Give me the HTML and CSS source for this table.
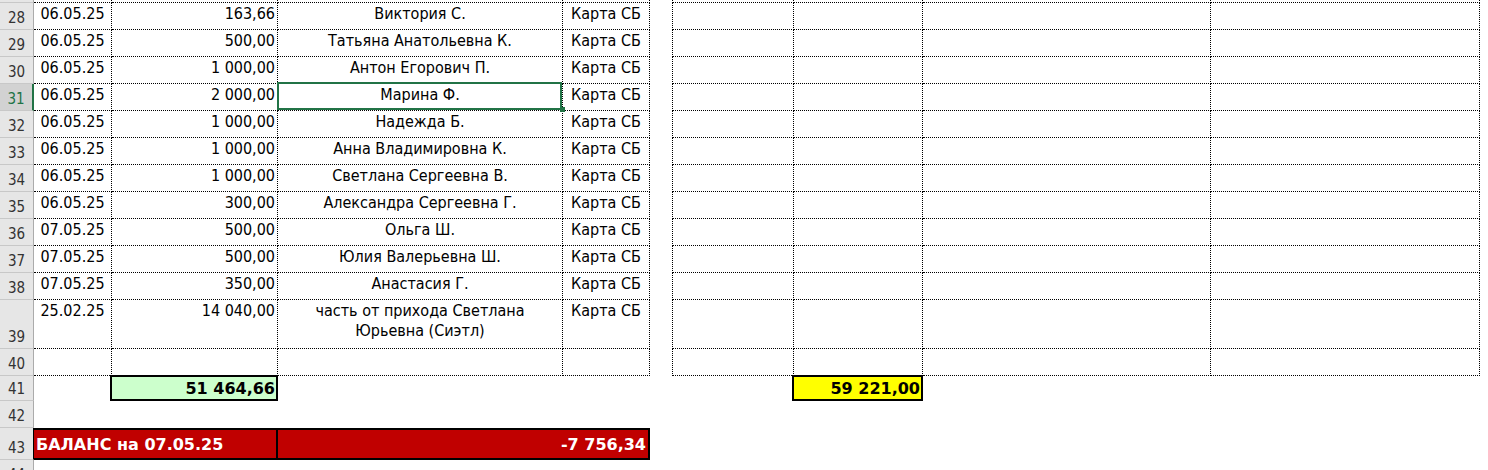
FILE: index.html
```html
<!DOCTYPE html>
<html>
<head>
    <title>Баланс</title>
    <meta charset="utf-8">
    <link rel="stylesheet" href="styles.css">
</head>
<body>
    <div class="sheet">
        <!-- tail of row 27 -->
        <div class="row r27">
            <div class="hd"></div>
            <div class="cell"></div>
            <div class="cell"></div>
            <div class="cell"></div>
            <div class="cell"></div>
            <div></div>
            <div class="cell first"></div>
            <div class="cell"></div>
            <div class="cell"></div>
            <div class="cell"></div>
            <div></div>
        </div>

        <div class="row">
            <div class="hd">28</div>
            <div class="cell ctr">06.05.25</div>
            <div class="cell num">163,66</div>
            <div class="cell ctr">Виктория С.</div>
            <div class="cell ctr">Карта СБ</div>
            <div></div>
            <div class="cell first"></div>
            <div class="cell"></div>
            <div class="cell"></div>
            <div class="cell"></div>
            <div></div>
        </div>

        <div class="row">
            <div class="hd">29</div>
            <div class="cell ctr">06.05.25</div>
            <div class="cell num">500,00</div>
            <div class="cell ctr">Татьяна Анатольевна К.</div>
            <div class="cell ctr">Карта СБ</div>
            <div></div>
            <div class="cell first"></div>
            <div class="cell"></div>
            <div class="cell"></div>
            <div class="cell"></div>
            <div></div>
        </div>

        <div class="row">
            <div class="hd">30</div>
            <div class="cell ctr">06.05.25</div>
            <div class="cell num">1 000,00</div>
            <div class="cell ctr">Антон Егорович П.</div>
            <div class="cell ctr">Карта СБ</div>
            <div></div>
            <div class="cell first"></div>
            <div class="cell"></div>
            <div class="cell"></div>
            <div class="cell"></div>
            <div></div>
        </div>

        <div class="row">
            <div class="hd active">31</div>
            <div class="cell ctr">06.05.25</div>
            <div class="cell num">2 000,00</div>
            <div class="cell ctr selected">Марина Ф.</div>
            <div class="cell ctr">Карта СБ</div>
            <div></div>
            <div class="cell first"></div>
            <div class="cell"></div>
            <div class="cell"></div>
            <div class="cell"></div>
            <div></div>
        </div>

        <div class="row">
            <div class="hd">32</div>
            <div class="cell ctr">06.05.25</div>
            <div class="cell num">1 000,00</div>
            <div class="cell ctr">Надежда Б.</div>
            <div class="cell ctr">Карта СБ</div>
            <div></div>
            <div class="cell first"></div>
            <div class="cell"></div>
            <div class="cell"></div>
            <div class="cell"></div>
            <div></div>
        </div>

        <div class="row">
            <div class="hd">33</div>
            <div class="cell ctr">06.05.25</div>
            <div class="cell num">1 000,00</div>
            <div class="cell ctr">Анна Владимировна К.</div>
            <div class="cell ctr">Карта СБ</div>
            <div></div>
            <div class="cell first"></div>
            <div class="cell"></div>
            <div class="cell"></div>
            <div class="cell"></div>
            <div></div>
        </div>

        <div class="row">
            <div class="hd">34</div>
            <div class="cell ctr">06.05.25</div>
            <div class="cell num">1 000,00</div>
            <div class="cell ctr">Светлана Сергеевна В.</div>
            <div class="cell ctr">Карта СБ</div>
            <div></div>
            <div class="cell first"></div>
            <div class="cell"></div>
            <div class="cell"></div>
            <div class="cell"></div>
            <div></div>
        </div>

        <div class="row">
            <div class="hd">35</div>
            <div class="cell ctr">06.05.25</div>
            <div class="cell num">300,00</div>
            <div class="cell ctr">Александра Сергеевна Г.</div>
            <div class="cell ctr">Карта СБ</div>
            <div></div>
            <div class="cell first"></div>
            <div class="cell"></div>
            <div class="cell"></div>
            <div class="cell"></div>
            <div></div>
        </div>

        <div class="row">
            <div class="hd">36</div>
            <div class="cell ctr">07.05.25</div>
            <div class="cell num">500,00</div>
            <div class="cell ctr">Ольга Ш.</div>
            <div class="cell ctr">Карта СБ</div>
            <div></div>
            <div class="cell first"></div>
            <div class="cell"></div>
            <div class="cell"></div>
            <div class="cell"></div>
            <div></div>
        </div>

        <div class="row">
            <div class="hd">37</div>
            <div class="cell ctr">07.05.25</div>
            <div class="cell num">500,00</div>
            <div class="cell ctr">Юлия Валерьевна Ш.</div>
            <div class="cell ctr">Карта СБ</div>
            <div></div>
            <div class="cell first"></div>
            <div class="cell"></div>
            <div class="cell"></div>
            <div class="cell"></div>
            <div></div>
        </div>

        <div class="row">
            <div class="hd">38</div>
            <div class="cell ctr">07.05.25</div>
            <div class="cell num">350,00</div>
            <div class="cell ctr">Анастасия Г.</div>
            <div class="cell ctr">Карта СБ</div>
            <div></div>
            <div class="cell first"></div>
            <div class="cell"></div>
            <div class="cell"></div>
            <div class="cell"></div>
            <div></div>
        </div>

        <div class="row r39">
            <div class="hd">39</div>
            <div class="cell ctr">25.02.25</div>
            <div class="cell num">14 040,00</div>
            <div class="cell ctr wrap">часть от прихода Светлана<br>Юрьевна (Сиэтл)</div>
            <div class="cell ctr">Карта СБ</div>
            <div></div>
            <div class="cell first"></div>
            <div class="cell"></div>
            <div class="cell"></div>
            <div class="cell"></div>
            <div></div>
        </div>

        <div class="row">
            <div class="hd">40</div>
            <div class="cell"></div>
            <div class="cell"></div>
            <div class="cell"></div>
            <div class="cell"></div>
            <div></div>
            <div class="cell first"></div>
            <div class="cell"></div>
            <div class="cell"></div>
            <div class="cell"></div>
            <div></div>
        </div>

        <!-- totals -->
        <div class="row r41">
            <div class="hd">41</div>
            <div></div>
            <div class="total green">51 464,66</div>
            <div></div>
            <div></div>
            <div></div>
            <div></div>
            <div class="total yellow">59 221,00</div>
            <div></div>
            <div></div>
            <div></div>
        </div>

        <div class="row">
            <div class="hd">42</div>
        </div>

        <div class="row r43">
            <div class="hd dark">43</div>
            <div class="balance label">БАЛАНС на 07.05.25</div>
            <div class="balance amount">-7 756,34</div>
        </div>

        <div class="row">
            <div class="hd">44</div>
        </div>
    </div>
</body>
</html>
```

FILE: styles.css
```css
body {
    margin: 0;
    background: #fff;
    color: #000;
    font-family: "DejaVu Sans Condensed", "DejaVu Sans", sans-serif;
    font-stretch: condensed;
    font-size: 16px;
}

.sheet {
    width: 1488px;
    height: 470px;
    overflow: hidden;
}

.row {
    display: grid;
    grid-template-columns: 34px 78px 166px 285px 87px 22px 122px 129px 288px 269px 8px;
    height: 27px;
}

.row > div {
    box-sizing: border-box;
    line-height: 20px;
    white-space: nowrap;
}

.r27 { height: 3px; }
.r39 { height: 49px; }
.r41 { height: 25px; }
.r43 { height: 32px; }

/* row numbers */
.hd {
    display: flex;
    align-items: flex-end;
    justify-content: center;
    padding-bottom: 1px;
    background: #e6e6e6;
    border-right: 1px solid #ababab;
    border-bottom: 1px solid #c8c8c8;
    color: #333;
    font-size: 15px;
}

.hd.active {
    background: #d2d2d2;
    color: #217346;
    border-right: 2px solid #217346;
}

.hd.dark {
    border-right-color: #000;
}

.cell {
    padding: 1px 3px 0;
    border-right: 1px dotted #000;
    border-bottom: 1px dotted #000;
}

.cell.first {
    border-left: 1px dotted #000;
}

.ctr { text-align: center; }
.num { text-align: right; padding-right: 2px; }
.wrap { white-space: normal; }

/* current cell */
.selected {
    position: relative;
}

.selected::after {
    content: "";
    position: absolute;
    left: -1px;
    right: 0;
    top: -2px;
    bottom: 0;
    border: 2px solid #217346;
}

.selected::before {
    content: "";
    position: absolute;
    right: -3px;
    bottom: -2px;
    width: 5px;
    height: 5px;
    background: #217346;
    z-index: 1;
}

.total {
    margin: -1px 0 0 -2px;
    padding: 2px 1px 0 0;
    border: 2px solid #000;
    text-align: right;
    font-family: "DejaVu Sans", sans-serif;
    font-stretch: normal;
    font-weight: bold;
}

.green { background: #ccffcc; }
.yellow { background: #ffff00; }

.balance {
    grid-column: span 2;
    padding-top: 5px;
    background: #c00000;
    color: #fff;
    border-top: 2px solid #000;
    border-bottom: 2px solid #000;
    border-right: 2px solid #000;
    font-family: "DejaVu Sans", sans-serif;
    font-stretch: normal;
    font-weight: bold;
}

.balance.label { padding-left: 2px; }
.balance.amount { text-align: right; padding-right: 2px; }
```
